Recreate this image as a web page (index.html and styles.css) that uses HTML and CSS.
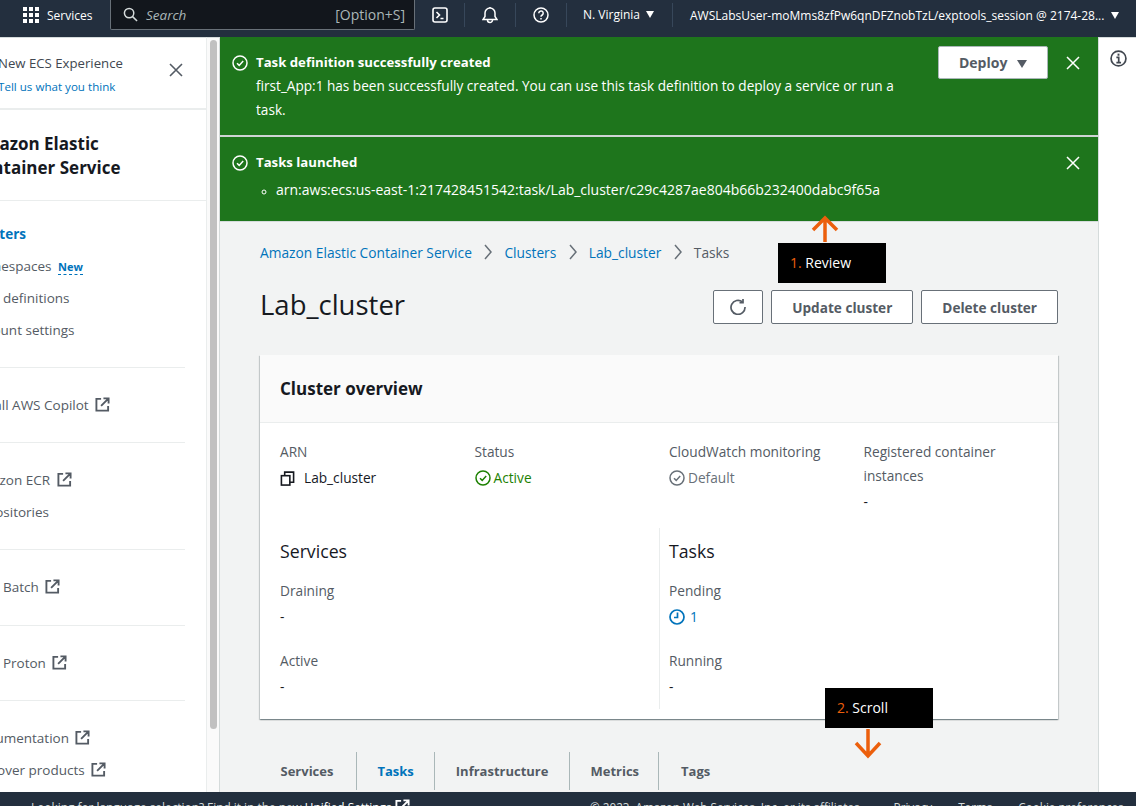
FILE: index.html
```html
<!DOCTYPE html>
<html lang="en">

<head>
    <meta charset="UTF-8">
    <title>Lab_cluster | Elastic Container Service</title>
    <link rel="stylesheet" href="styles.css">
</head>

<body>

    <!-- Top navigation -->
    <header class="topnav">
        <div class="nav-services">
            <svg class="grid-icon" width="16" height="16" viewBox="0 0 16 16" fill="#fff">
                <rect x="0" y="0" width="4" height="4"/><rect x="6" y="0" width="4" height="4"/><rect x="12" y="0" width="4" height="4"/>
                <rect x="0" y="6" width="4" height="4"/><rect x="6" y="6" width="4" height="4"/><rect x="12" y="6" width="4" height="4"/>
                <rect x="0" y="12" width="4" height="4"/><rect x="6" y="12" width="4" height="4"/><rect x="12" y="12" width="4" height="4"/>
            </svg>
            <span>Services</span>
        </div>
        <div class="nav-search">
            <svg width="15" height="15" viewBox="0 0 16 16" fill="none" stroke="#d5dbdb" stroke-width="1.6">
                <circle cx="6.5" cy="6.5" r="5"/><path d="M10 10l5 5"/>
            </svg>
            <span class="search-text">Search</span>
            <span class="search-key">[Option+S]</span>
        </div>
        <div class="nav-icon first">
            <svg width="16" height="16" viewBox="0 0 16 16" fill="none" stroke="#fff" stroke-width="1.6">
                <rect x="1" y="1" width="14" height="14" rx="2"/><path d="M4.5 5l3 3-3 3M8.5 11.5h3"/>
            </svg>
        </div>
        <div class="nav-icon">
            <svg width="16" height="18" viewBox="0 0 16 18" fill="none" stroke="#fff" stroke-width="1.5">
                <path d="M1 13.5h14l-2-3V7a5 5 0 0 0-10 0v3.5z"/><path d="M8 1v1M5.5 14a2.5 2.5 0 0 0 5 0"/>
            </svg>
        </div>
        <div class="nav-icon">
            <svg width="16" height="16" viewBox="0 0 16 16" fill="none" stroke="#fff" stroke-width="1.5">
                <circle cx="8" cy="8" r="7"/><path d="M5.8 6.2a2.2 2.2 0 1 1 3.4 1.8c-.8.5-1.2 1-1.2 1.8"/><path d="M8 11v1.4"/>
            </svg>
        </div>
        <div class="nav-region">N. Virginia <span class="caret"></span></div>
        <div class="nav-user">AWSLabsUser-moMms8zfPw6qnDFZnobTzL/exptools_session @ 2174-28... <span class="caret"></span></div>
    </header>

    <div class="layout">

        <!-- Side navigation, scrolled a little to the right -->
        <aside class="sidenav">
            <div class="sidenav-inner">
                <div class="side-promo">
                    <div>
                        <p class="promo-title">New ECS Experience</p>
                        <a class="promo-link">Tell us what you think</a>
                    </div>
                    <svg class="promo-close" width="14" height="14" viewBox="0 0 14 14" stroke="#545b64" stroke-width="1.6"><path d="M1 1l12 12M13 1L1 13"/></svg>
                </div>
                <h2 class="side-title">Amazon Elastic Container Service</h2>
                <ul class="side-group first">
                    <li class="active">Clusters</li>
                    <li>Namespaces <span class="badge-new">New</span></li>
                    <li>Task definitions</li>
                    <li>Account settings</li>
                </ul>
                <ul class="side-group">
                    <li>Install AWS Copilot <svg class="ext" viewBox="0 0 16 16"><use href="#ext-icon"/></svg></li>
                </ul>
                <ul class="side-group">
                    <li>Amazon ECR <svg class="ext" viewBox="0 0 16 16"><use href="#ext-icon"/></svg></li>
                    <li>Repositories</li>
                </ul>
                <ul class="side-group group-batch">
                    <li>AWS Batch <svg class="ext" viewBox="0 0 16 16"><use href="#ext-icon"/></svg></li>
                </ul>
                <ul class="side-group">
                    <li>AWS Proton <svg class="ext" viewBox="0 0 16 16"><use href="#ext-icon"/></svg></li>
                </ul>
                <ul class="side-group">
                    <li>Documentation <svg class="ext" viewBox="0 0 16 16"><use href="#ext-icon"/></svg></li>
                    <li>Discover products <svg class="ext" viewBox="0 0 16 16"><use href="#ext-icon"/></svg></li>
                </ul>
            </div>
        </aside>
        <div class="side-scroll"><div class="side-thumb"></div></div>

        <!-- Main content -->
        <main class="main">
            <div class="flash flash-first">
                <svg class="flash-icon" width="16" height="16" viewBox="0 0 16 16" fill="none" stroke="#fff" stroke-width="1.5"><circle cx="8" cy="8" r="7"/><path d="M5 8.2l2.2 2.2L11.2 6"/></svg>
                <div class="flash-body">
                    <p class="flash-title">Task definition successfully created</p>
                    <p class="flash-text">first_App:1 has been successfully created. You can use this task definition to deploy a service or run a task.</p>
                </div>
                <button class="btn-deploy">Deploy <span class="caret deploy-caret"></span></button>
                <svg class="flash-close" width="14" height="14" viewBox="0 0 14 14" stroke="#fff" stroke-width="1.5"><path d="M1 1l12 12M13 1L1 13"/></svg>
            </div>
            <div class="flash flash-second">
                <svg class="flash-icon" width="16" height="16" viewBox="0 0 16 16" fill="none" stroke="#fff" stroke-width="1.5"><circle cx="8" cy="8" r="7"/><path d="M5 8.2l2.2 2.2L11.2 6"/></svg>
                <div class="flash-body">
                    <p class="flash-title">Tasks launched</p>
                    <ul class="flash-list">
                        <li>arn:aws:ecs:us-east-1:217428451542:task/Lab_cluster/c29c4287ae804b66b232400dabc9f65a</li>
                    </ul>
                </div>
                <svg class="flash-close" width="14" height="14" viewBox="0 0 14 14" stroke="#fff" stroke-width="1.5"><path d="M1 1l12 12M13 1L1 13"/></svg>
            </div>

            <div class="content">
                <nav class="crumbs">
                    <a>Amazon Elastic Container Service</a>
                    <svg class="crumb-sep" width="8" height="16" viewBox="0 0 8 16" fill="none" stroke="#687078" stroke-width="1.5"><path d="M1 1l6 7-6 7"/></svg>
                    <a>Clusters</a>
                    <svg class="crumb-sep" width="8" height="16" viewBox="0 0 8 16" fill="none" stroke="#687078" stroke-width="1.5"><path d="M1 1l6 7-6 7"/></svg>
                    <a>Lab_cluster</a>
                    <svg class="crumb-sep" width="8" height="16" viewBox="0 0 8 16" fill="none" stroke="#687078" stroke-width="1.5"><path d="M1 1l6 7-6 7"/></svg>
                    <span>Tasks</span>
                </nav>

                <div class="page-head">
                    <h1>Lab_cluster</h1>
                    <div class="page-actions">
                        <button class="btn btn-icon">
                            <svg width="16" height="16" viewBox="0 0 16 16" fill="none" stroke="#545b64" stroke-width="1.7"><path d="M12.5 3A7 7 0 1 0 15 8"/><path d="M9.5 3.6h3.5V0"/></svg>
                        </button>
                        <button class="btn">Update cluster</button>
                        <button class="btn">Delete cluster</button>
                    </div>
                </div>

                <section class="card">
                    <div class="card-head">
                        <h2>Cluster overview</h2>
                    </div>
                    <div class="card-body">
                        <div class="overview-row">
                            <div class="field">
                                <div class="label">ARN</div>
                                <div class="value value-arn">
                                    <svg width="15" height="15" viewBox="0 0 16 16" fill="none" stroke="#16191f" stroke-width="1.7"><rect x="1.5" y="5" width="9" height="10"/><path d="M5 5V1.2h9.5V12h-4"/></svg>
                                    Lab_cluster
                                </div>
                            </div>
                            <div class="field">
                                <div class="label">Status</div>
                                <div class="value status-active">
                                    <svg width="16" height="16" viewBox="0 0 16 16" fill="none" stroke="#1d8102" stroke-width="1.5"><circle cx="8" cy="8" r="7"/><path d="M5 8.2l2.2 2.2L11.2 6"/></svg>
                                    Active
                                </div>
                            </div>
                            <div class="field">
                                <div class="label">CloudWatch monitoring</div>
                                <div class="value status-muted">
                                    <svg width="16" height="16" viewBox="0 0 16 16" fill="none" stroke="#687078" stroke-width="1.5"><circle cx="8" cy="8" r="7"/><path d="M5 8.2l2.2 2.2L11.2 6"/></svg>
                                    Default
                                </div>
                            </div>
                            <div class="field">
                                <div class="label label-wrap">Registered container instances</div>
                                <div class="value">-</div>
                            </div>
                        </div>

                        <div class="counts">
                            <div class="counts-col">
                                <h3>Services</h3>
                                <div class="label">Draining</div>
                                <div class="value count-gap">-</div>
                                <div class="label">Active</div>
                                <div class="value">-</div>
                            </div>
                            <div class="counts-col counts-right">
                                <h3>Tasks</h3>
                                <div class="label">Pending</div>
                                <div class="value count-gap status-pending">
                                    <svg width="16" height="16" viewBox="0 0 16 16" fill="none" stroke="#0073bb" stroke-width="1.7"><circle cx="8" cy="8" r="7"/><path d="M8.5 3.5v5H5"/></svg>
                                    1
                                </div>
                                <div class="label">Running</div>
                                <div class="value">-</div>
                            </div>
                        </div>
                    </div>
                </section>

                <div class="tabs">
                    <a class="tab tab-first">Services</a>
                    <a class="tab tab-active">Tasks</a>
                    <a class="tab">Infrastructure</a>
                    <a class="tab tab-metrics">Metrics</a>
                    <a class="tab">Tags</a>
                </div>
            </div>

            <!-- Tutorial callouts laid over the page -->
            <div class="callout callout-review"><span class="num">1.</span> Review</div>
            <svg class="arrow arrow-up" width="36" height="28" viewBox="0 0 36 28" fill="none" stroke="#ec5f0c" stroke-width="3.5"><path d="M18 27V3M6 15L18 3l12 12"/></svg>
            <div class="callout callout-scroll"><span class="num">2.</span> Scroll</div>
            <svg class="arrow arrow-down" width="36" height="32" viewBox="0 0 36 32" fill="none" stroke="#ec5f0c" stroke-width="3.5"><path d="M18 0v27M6 14l12 13 12-13"/></svg>
        </main>

        <!-- Right tools rail -->
        <aside class="rail">
            <svg width="17" height="17" viewBox="0 0 16 16" fill="none" stroke="#414750" stroke-width="1.6"><circle cx="8" cy="8" r="7"/><path d="M6 7h2.2v4.5M6 11.8h4.4"/><path d="M8 3.4v2" stroke-width="1.8"/></svg>
        </aside>
    </div>

    <!-- Footer -->
    <footer class="footer">
        <span class="foot-lang">Looking for language selection? Find it in the new <b>Unified Settings</b> <svg class="ext ext-foot" viewBox="0 0 16 16"><use href="#ext-icon"/></svg></span>
        <span class="foot-copy">&copy; 2023, Amazon Web Services, Inc. or its affiliates.</span>
        <span class="foot-link foot-privacy">Privacy</span>
        <span class="foot-link">Terms</span>
        <span class="foot-link">Cookie preferences</span>
    </footer>

    <svg class="defs" width="0" height="0">
        <symbol id="ext-icon" viewBox="0 0 16 16">
            <path d="M6.5 2H1.5v12.5H14V9.5M9 1.5h5.5V7M14.5 1.5L6.5 9.5" fill="none" stroke="currentColor" stroke-width="2"/>
        </symbol>
    </svg>

</body>

</html>
```

FILE: styles.css
```css
/* General Reset */
* {
    margin: 0;
    padding: 0;
    box-sizing: border-box;
}

html,
body {
    height: 806px;
    overflow: hidden;
}

body {
    font-family: 'Open Sans', 'Noto Sans', sans-serif;
    font-size: 14px;
    color: #16191f;
    background: #fff;
    display: flex;
    flex-direction: column;
}

ul {
    list-style: none;
}

/* Top navigation */
.topnav {
    height: 37px;
    flex: none;
    background: #232f3e;
    color: #fff;
    display: flex;
    align-items: center;
    font-size: 12px;
    padding-bottom: 7px;
}

.nav-services {
    display: flex;
    align-items: center;
    gap: 8px;
    margin-left: 23px;
    width: 87px;
    flex: none;
}

.nav-search {
    width: 305px;
    height: 30px;
    flex: none;
    display: flex;
    align-items: center;
    gap: 8px;
    padding: 0 9px 0 12px;
    background: #12161c;
    border: 1px solid #687078;
    border-top: 0;
    color: #aab7b8;
    font-size: 13.5px;
    border-radius: 0 0 2px 2px;
}

.search-text {
    font-style: italic;
    flex: 1;
}

.search-key {
    font-size: 14px;
}

.nav-icon {
    width: 51px;
    height: 24px;
    display: flex;
    align-items: center;
    justify-content: center;
    flex: none;
    border-right: 1px solid #37475a;
}

.nav-icon.first {
    width: 50px;
    justify-content: flex-start;
    padding-left: 17px;
}

.nav-region {
    width: 106px;
    flex: none;
    padding-left: 16px;
    height: 24px;
    line-height: 24px;
    border-right: 1px solid #37475a;
    white-space: nowrap;
}

.nav-user {
    padding-left: 17px;
    white-space: nowrap;
}

.caret {
    display: inline-block;
    width: 0;
    height: 0;
    margin-left: 3px;
    vertical-align: 1px;
    border-left: 4.5px solid transparent;
    border-right: 4.5px solid transparent;
    border-top: 7px solid currentColor;
}

/* Page layout */
.layout {
    flex: 1;
    display: flex;
    min-height: 0;
}

/* Side navigation */
.sidenav {
    width: 206px;
    flex: none;
    overflow: hidden;
    background: #fff;
    border-top: 1px solid #d5dbdb;
    color: #545b64;
}

.sidenav-inner {
    width: 235px;
    margin-left: -29px;
}

.side-promo {
    height: 72px;
    padding: 15px 0 0 27px;
    border-bottom: 2px solid #eaeded;
    display: flex;
    justify-content: space-between;
    width: 100%;
}

.promo-title {
    font-size: 13.2px;
    line-height: 20px;
    color: #414750;
}

.promo-link {
    display: block;
    font-size: 11.6px;
    line-height: 20px;
    margin-top: 4px;
    color: #0073bb;
}

.promo-close {
    margin: 10px 23px 0 0;
}

.side-title {
    font-size: 17px;
    line-height: 24px;
    font-weight: 700;
    color: #16191f;
    padding: 22px 60px 20px 0;
    width: 235px;
    border-bottom: 1px solid #eaeded;
}

.side-group {
    width: 214px;
    padding: 21px 0;
    border-bottom: 1px solid #eaeded;
}

.side-group.first {
    padding-top: 17px;
}

.group-batch {
    padding-bottom: 22px;
}

.side-group:last-child {
    border-bottom: 0;
}

.side-group li {
    height: 32px;
    line-height: 32px;
    font-size: 13.5px;
    white-space: nowrap;
}

.side-group li.active {
    color: #0073bb;
    font-weight: 700;
}

.badge-new {
    font-size: 11px;
    font-weight: 700;
    color: #0073bb;
    margin-left: 3px;
    border-bottom: 1px dashed #0073bb;
}

.ext {
    width: 15px;
    height: 15px;
    margin-left: 3px;
    color: #545b64;
    vertical-align: -2px;
}

.side-scroll {
    width: 14px;
    flex: none;
    background: #fafafa;
    border-left: 1px solid #eaeded;
    border-right: 1px solid #d5dbdb;
    border-top: 1px solid #d5dbdb;
    padding: 2px 2px 0 3px;
}

.side-thumb {
    height: 689px;
    background: #c1c1c1;
    border-radius: 4px;
}

/* Main content */
.main {
    position: relative;
    width: 878px;
    flex: none;
    background: #f2f3f3;
    overflow: hidden;
}

.flash {
    background: #1e751c;
    color: #fff;
    display: flex;
    align-items: flex-start;
    padding: 13px 18px 0 12px;
    font-size: 13.6px;
    line-height: 24px;
}

.flash-first {
    height: 98px;
}

.flash-second {
    height: 87px;
    border-top: 2px solid #cfd4d4;
    border-bottom: 1px solid #d5dbdb;
}

.flash-icon {
    flex: none;
    margin: 5px 8px 0 0;
}

.flash-body {
    flex: 1;
}

.flash-first .flash-body {
    max-width: 650px;
}

.flash-title {
    font-weight: 700;
    font-size: 13.2px;
}

.flash-list {
    list-style: circle;
    padding-left: 20px;
    margin-top: 4px;
    font-size: 14px;
}

.flash-list li::marker {
    font-size: 10px;
}

.btn-deploy {
    width: 110px;
    height: 33px;
    flex: none;
    margin-left: auto;
    margin-top: -4px;
    background: #fff;
    border: 1px solid #aab7b8;
    color: #545b64;
    font: 700 14px 'Open Sans', sans-serif;
    border-radius: 2px;
}

.deploy-caret {
    margin-left: 6px;
    border-left-width: 5.5px;
    border-right-width: 5.5px;
    border-top-width: 8px;
    vertical-align: 0;
}

.flash-close {
    flex: none;
    margin: 6px 0 0 18px;
}

.content {
    padding: 20px 40px 0;
}

.crumbs {
    display: flex;
    align-items: center;
    gap: 10px;
    height: 20px;
    color: #545b64;
    font-size: 13.75px;
}

.crumbs a {
    color: #0073bb;
}

.crumb-sep {
    margin-left: 2.5px;
    margin-right: 2px;
}

.page-head {
    display: flex;
    align-items: center;
    justify-content: space-between;
    margin-top: 28px;
    height: 34px;
}

.page-head h1 {
    font-size: 27.5px;
    line-height: 34px;
    font-weight: 400;
    padding-bottom: 4px;
}

.page-actions {
    display: flex;
    gap: 8px;
}

.btn {
    height: 34px;
    padding: 0 20px;
    background: #fff;
    border: 1px solid #687078;
    color: #545b64;
    font: 700 13.6px 'Open Sans', sans-serif;
    border-radius: 2px;
}

.btn-icon {
    width: 50px;
    padding: 0;
    display: flex;
    align-items: center;
    justify-content: center;
}

/* Cluster overview card */
.card {
    margin-top: 31px;
    height: 364px;
    background: #fff;
    box-shadow: 0 1px 1px 0 rgba(0, 28, 36, .3), 1px 1px 1px 0 rgba(0, 28, 36, .15), -1px 1px 1px 0 rgba(0, 28, 36, .15);
}

.card-head {
    height: 68px;
    background: #fafafa;
    border-bottom: 1px solid #eaeded;
    padding: 0 20px;
    display: flex;
    align-items: center;
}

.card-head h2 {
    font-size: 17px;
    font-weight: 700;
}

.card-body {
    padding: 17px 20px 0;
}

.overview-row {
    display: grid;
    grid-template-columns: repeat(4, 194.5px);
}

.label {
    color: #545b64;
    line-height: 24px;
    font-size: 13.7px;
}

.label-wrap {
    max-width: 160px;
}

.value {
    display: flex;
    align-items: center;
    gap: 5px;
    line-height: 24px;
    height: 24px;
    margin-top: 2px;
    color: #16191f;
    font-size: 13.7px;
}

.value-arn {
    gap: 9px;
}

.status-active {
    color: #1d8102;
    gap: 3px;
}

.status-muted {
    color: #687078;
    gap: 3px;
}

.status-pending {
    color: #0073bb;
}

.counts {
    display: grid;
    grid-template-columns: 1fr 1fr;
    margin-top: 14px;
    height: 181px;
}

.counts-col {
    padding-top: 9px;
}

.counts-right {
    border-left: 1px solid #eaeded;
    padding-left: 9px;
}

.counts h3 {
    font-size: 17.7px;
    font-weight: 400;
    line-height: 28px;
    margin-bottom: 14px;
}

.count-gap {
    margin-bottom: 20px;
}

/* Tabs */
.tabs {
    display: flex;
    margin-top: 33px;
    height: 38px;
}

.tab {
    display: flex;
    align-items: center;
    padding: 0 20.5px;
    font-size: 13px;
    font-weight: 700;
    color: #545b64;
    border-right: 1px solid #aab7b8;
}

.tab-first {
    padding-right: 22.5px;
}

.tab-metrics {
    padding-right: 19px;
}

.tab:last-child {
    border-right: 0;
    padding-left: 22px;
}

.tab-active {
    color: #0073bb;
}

/* Tutorial callouts */
.callout {
    position: absolute;
    width: 108px;
    height: 40px;
    line-height: 40px;
    padding-left: 12px;
    background: #000;
    color: #fff;
    font-size: 14px;
}

.callout .num {
    color: #ec5f0c;
}

.callout-review {
    left: 558px;
    top: 206px;
}

.callout-scroll {
    left: 605px;
    top: 651px;
}

.arrow {
    position: absolute;
}

.arrow-up {
    left: 587px;
    top: 178px;
}

.arrow-down {
    left: 630px;
    top: 692px;
}

/* Right rail */
.rail {
    flex: 1;
    background: #fff;
    border-left: 1px solid #d5dbdb;
    border-top: 1px solid #d5dbdb;
    padding: 12px 0 0 11px;
}

/* Footer */
.footer {
    height: 14px;
    flex: none;
    background: #232f3e;
    color: #d5dbdb;
    font-size: 11.7px;
    line-height: 20px;
    white-space: nowrap;
    display: flex;
    padding: 5px 0 0 31px;
    overflow: hidden;
}

.foot-lang {
    width: 559px;
    font-size: 11.85px;
}

.foot-lang b {
    color: #fff;
    font-weight: 400;
}

.ext-foot {
    color: #fff;
    margin-left: 0;
}

.foot-link {
    margin-left: 26px;
}

.foot-privacy {
    margin-left: 31px;
}

.defs {
    position: absolute;
}
```
